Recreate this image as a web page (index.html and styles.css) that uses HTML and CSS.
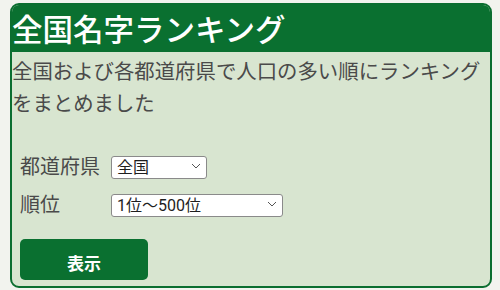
FILE: index.html
```html
<!DOCTYPE html>
<html lang="ja">
<head>
<meta charset="utf-8">
<title>全国名字ランキング</title>
<link rel="stylesheet" href="styles.css">
</head>
<body>
<section class="card">
  <h1 class="card-title">全国名字ランキング</h1>
  <div class="card-body">
    <p class="lead">全国および各都道府県で人口の多い順にランキングをまとめました</p>
    <form class="form">
      <div class="field">
        <label class="label" for="pref">都道府県</label>
        <span class="select-wrap select-pref">
          <select id="pref" class="select"><option>全国</option></select>
          <svg class="chev" width="10" height="6" viewBox="0 0 10 6"><path d="M1 1 L5 5 L9 1" fill="none" stroke="#555" stroke-width="1"/></svg>
        </span>
      </div>
      <div class="field">
        <label class="label" for="rank">順位</label>
        <span class="select-wrap select-rank">
          <select id="rank" class="select"><option>1位〜500位</option></select>
          <svg class="chev" width="10" height="6" viewBox="0 0 10 6"><path d="M1 1 L5 5 L9 1" fill="none" stroke="#555" stroke-width="1"/></svg>
        </span>
      </div>
      <button type="button" class="btn">表示</button>
    </form>
  </div>
</section>
</body>
</html>
```

FILE: styles.css
```css
html, body {
  margin: 0;
  padding: 0;
}
body {
  background: #f2f3ee;
  font-family: "Noto Sans CJK JP", "Noto Sans", sans-serif;
  padding: 3px 8px 0 10px;
}
.card {
  width: 478px;
  height: 281px;
  border: 2px solid #0b6e30;
  border-radius: 9px;
  overflow: hidden;
  background: #d8e5d0;
  display: flex;
  flex-direction: column;
}
.card-title {
  margin: 0;
  background: #0a7030;
  color: #ffffff;
  font-size: 30.5px;
  font-weight: 500;
  line-height: 47px;
  height: 47px;
  padding-left: 0;
}
.card-body {
  padding: 2px 0 0 0;
}
.lead {
  margin: 0;
  font-size: 20.4px;
  line-height: 32px;
  color: #4a4a4a;
}
.form {
  padding: 36px 0 0 8px;
  display: flex;
  flex-direction: column;
  align-items: flex-start;
}
.field {
  display: grid;
  grid-template-columns: 91px auto;
  align-items: center;
  height: 23px;
  margin-bottom: 15px;
}
.label {
  font-size: 20px;
  color: #4a4a4a;
  line-height: 23px;
}
.select-wrap {
  position: relative;
  display: block;
  height: 23px;
}
.select-pref { width: 96px; }
.select-rank { width: 172px; }
.select {
  -webkit-appearance: none;
  appearance: none;
  box-sizing: border-box;
  width: 100%;
  height: 23px;
  margin: 0;
  padding: 0 0 0 5px;
  border: 1px solid #8a8a8a;
  border-radius: 3px;
  background: #ffffff;
  color: #1e1e1e;
  font-family: "Roboto", "Noto Sans CJK JP", sans-serif;
  font-size: 16px;
  line-height: 21px;
}
.chev {
  position: absolute;
  right: 6px;
  top: 9px;
  pointer-events: none;
}
.btn {
  margin-top: 9px;
  width: 128px;
  height: 41px;
  border: none;
  border-radius: 5px;
  background: #0a7030;
  color: #ffffff;
  font-family: "Noto Sans CJK JP", sans-serif;
  font-size: 17px;
  font-weight: 700;
  padding: 6px 0 0 0;
}
```
